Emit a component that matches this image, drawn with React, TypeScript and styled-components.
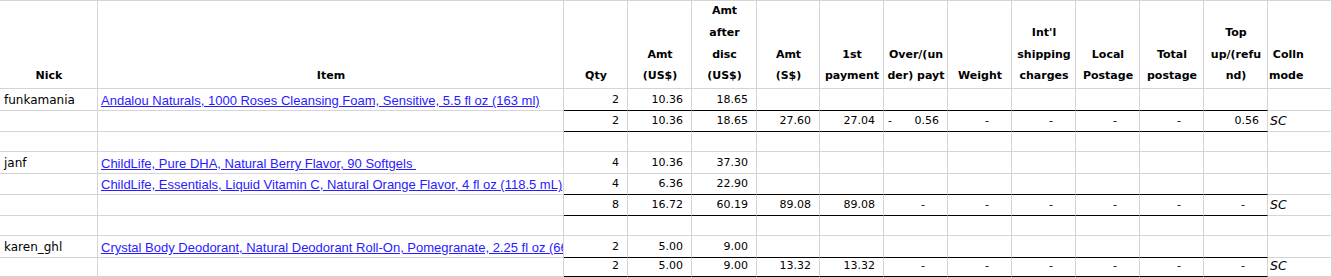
import React from "react";
import styled, { createGlobalStyle } from "styled-components";

const GlobalStyle = createGlobalStyle`
    html, body {
        margin: 0;
        padding: 0;
        background: #ffffff;
    }
`;

const GRID = "#d4d4d4";

const columns: { width: number; head: string[]; align?: "center" | "left" }[] = [
    { width: 98, head: ["Nick"] },
    { width: 466, head: ["Item"] },
    { width: 64, head: ["Qty"] },
    { width: 64, head: ["Amt", "(US$)"] },
    { width: 65, head: ["Amt", "after", "disc", "(US$)"] },
    { width: 63, head: ["Amt", "(S$)"] },
    { width: 64, head: ["1st", "payment"] },
    { width: 64, head: ["Over/(un", "der) payt"] },
    { width: 64, head: ["Weight"] },
    { width: 64, head: ["Int'l", "shipping", "charges"] },
    { width: 64, head: ["Local", "Postage"] },
    { width: 64, head: ["Total", "postage"] },
    { width: 64, head: ["Top", "up/(refu", "nd)"] },
    { width: 64, head: ["\u00a0Colln", "mode"], align: "left" },
];

const rowHeights = [22, 21, 20, 22, 21, 21, 20, 22, 19];

const Sheet = styled.div`
    display: grid;
    grid-template-columns: ${columns.map((c) => `${c.width}px`).join(" ")};
    grid-template-rows: 88px ${rowHeights.map((h) => `${h}px`).join(" ")};
    width: 1332px;
    border-top: 1px solid ${GRID};
    font-family: "DejaVu Sans", "Liberation Sans", sans-serif;
    font-size: 11px;
    color: #000;
`;

const HeadCell = styled.div<{ $align?: string }>`
    box-sizing: border-box;
    border-right: 1px solid ${GRID};
    border-bottom: 1px solid ${GRID};
    display: flex;
    flex-direction: column;
    justify-content: flex-end;
    align-items: ${(p) => (p.$align === "left" ? "flex-start" : "center")};
    padding: 0 0 1px 1px;
    font-weight: bold;
    font-size: 11px;
    line-height: 21.7px;
    white-space: pre;
    overflow: hidden;
`;

const Cell = styled.div<{ $align?: string; $rule?: boolean; $pad?: number }>`
    box-sizing: border-box;
    border-right: 1px solid ${GRID};
    border-bottom: 1px solid ${(p) => (p.$rule ? "#000" : GRID)};
    display: flex;
    align-items: flex-end;
    justify-content: ${(p) =>
        p.$align === "right" ? "flex-end" : p.$align === "split" ? "space-between" : "flex-start"};
    padding: 0 ${(p) => p.$pad ?? 8}px 3px 4px;
    line-height: 14px;
    white-space: pre;
    overflow: hidden;
`;

const Nick = styled.span`
    font-size: 12px;
`;

const ItemLink = styled.a`
    font-family: "Liberation Sans", Arial, sans-serif;
    font-size: 13px;
    line-height: 15px;
    color: #2a1aff;
    text-decoration: underline;
    white-space: pre;
    margin-left: -1px;
    margin-bottom: -1px;
`;

const Mode = styled.span`
    font-style: italic;
    font-size: 12.5px;
    margin-left: -2px;
`;

type Row =
    | { kind: "blank" }
    | { kind: "item"; nick?: string; item: string; qty: string; amt: string; disc: string }
    | {
          kind: "total";
          qty: string;
          amt: string;
          disc: string;
          sgd: string;
          paid: string;
          over?: string;
          topup?: string;
      };

const rows: Row[] = [
    {
        kind: "item",
        nick: "funkamania",
        item: "Andalou Naturals, 1000 Roses Cleansing Foam, Sensitive, 5.5 fl oz (163 ml)",
        qty: "2",
        amt: "10.36",
        disc: "18.65",
    },
    { kind: "total", qty: "2", amt: "10.36", disc: "18.65", sgd: "27.60", paid: "27.04", over: "0.56", topup: "0.56" },
    { kind: "blank" },
    {
        kind: "item",
        nick: "janf",
        item: "ChildLife, Pure DHA, Natural Berry Flavor, 90 Softgels ",
        qty: "4",
        amt: "10.36",
        disc: "37.30",
    },
    {
        kind: "item",
        item: "ChildLife, Essentials, Liquid Vitamin C, Natural Orange Flavor, 4 fl oz (118.5 mL)",
        qty: "4",
        amt: "6.36",
        disc: "22.90",
    },
    { kind: "total", qty: "8", amt: "16.72", disc: "60.19", sgd: "89.08", paid: "89.08" },
    { kind: "blank" },
    {
        kind: "item",
        nick: "karen_ghl",
        item: "Crystal Body Deodorant, Natural Deodorant Roll-On, Pomegranate, 2.25 fl oz (66 ml)",
        qty: "2",
        amt: "5.00",
        disc: "9.00",
    },
    { kind: "total", qty: "2", amt: "5.00", disc: "9.00", sgd: "13.32", paid: "13.32" },
];

const num = (v: string) => ({ align: "right", text: v, pad: 8 });
const dash = () => ({ align: "right", text: "-", pad: 22 });

const cellsFor = (row: Row) => {
    const out: { align?: string; text?: React.ReactNode; pad?: number }[] = [];
    for (let i = 0; i < columns.length; i++) out.push({});
    if (row.kind === "item") {
        out[0] = { text: <Nick>{row.nick ?? ""}</Nick> };
        out[1] = { text: <ItemLink href="#">{row.item}</ItemLink>, pad: 0 };
        out[2] = num(row.qty);
        out[3] = num(row.amt);
        out[4] = num(row.disc);
    }
    if (row.kind === "total") {
        out[2] = num(row.qty);
        out[3] = num(row.amt);
        out[4] = num(row.disc);
        out[5] = num(row.sgd);
        out[6] = num(row.paid);
        out[7] = row.over
            ? { align: "split", text: <><span>-</span><span>{row.over}</span></>, pad: 8 }
            : dash();
        out[8] = dash();
        out[9] = dash();
        out[10] = dash();
        out[11] = dash();
        out[12] = row.topup ? num(row.topup) : dash();
        out[13] = { text: <Mode>SC</Mode> };
    }
    return out;
};

const App = () => {
    return (
        <>
            <GlobalStyle />
            <Sheet>
                {columns.map((c, i) => (
                    <HeadCell key={`h${i}`} $align={c.align}>
                        {c.head.map((line, j) => (
                            <span key={j}>{line}</span>
                        ))}
                    </HeadCell>
                ))}
                {rows.map((row, r) => {
                    const next = rows[r + 1];
                    const ruled = row.kind === "total" || (next && next.kind === "total");
                    return cellsFor(row).map((cell, c) => (
                        <Cell
                            key={`${r}-${c}`}
                            $align={cell.align}
                            $pad={cell.pad}
                            $rule={ruled && c >= 2 && c <= 12}
                        >
                            {cell.text}
                        </Cell>
                    ));
                })}
            </Sheet>
        </>
    );
};

export default App;
